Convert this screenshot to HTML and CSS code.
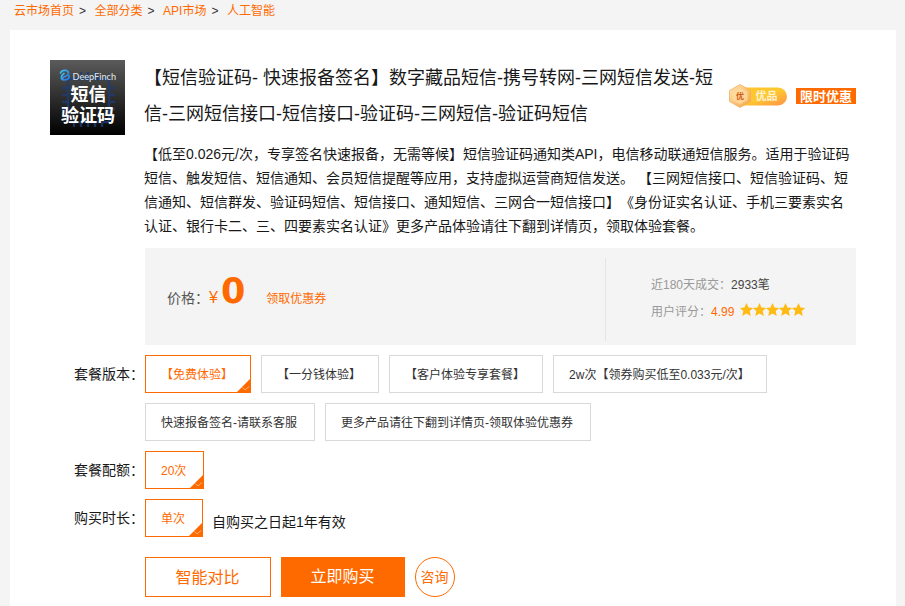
FILE: index.html
```
<!DOCTYPE html>
<html lang="zh-CN">
<head>
<meta charset="utf-8">
<title>短信验证码</title>
<link rel="stylesheet" href="styles.css">
</head>
<body>
<nav class="crumbs"><a>云市场首页</a><i>&gt;</i><a>全部分类</a><i>&gt;</i><a>API市场</a><i>&gt;</i><a>人工智能</a></nav>
<main class="panel">
  <svg class="logo" width="75" height="75" viewBox="0 0 75 75">
    <defs>
      <linearGradient id="bg" x1="0" y1="0" x2="0" y2="1"><stop offset="0" stop-color="#5b5b5b"/><stop offset="1" stop-color="#000"/></linearGradient>
      <linearGradient id="mark" x1="0" y1="0" x2="1" y2="1"><stop offset="0" stop-color="#3cc4ef"/><stop offset="1" stop-color="#2a6fe0"/></linearGradient>
    </defs>
    <rect width="75" height="75" fill="url(#bg)"/>
    <g stroke="#1d3d76" stroke-width="2.400" opacity=".75" fill="none">
      <rect x="18" y="19" width="41" height="43"/>
      <path d="M12 28h6M12 35h6M12 42h6M12 49h6M12 56h6M59 28h6M59 35h6M59 42h6M59 49h6M59 56h6M24 62v5M31 62v5M38 62v5M45 62v5M52 62v5M31 12v7M38 12v7M45 12v7"/>
    </g>
    <g fill="none" stroke="url(#mark)" stroke-width="1.700" stroke-linecap="round">
      <path d="M10.500 13c1.500-3.500 8-3.500 8 .5c0 3-6 2.500-6 5.500"/>
      <path d="M14 13.500c-3 2-4 6 0 6.500c3.500 0 6-2 5-4"/>
    </g>
    <text class="logo-brand" x="22.500" y="19.500" textLength="43.500" lengthAdjust="spacingAndGlyphs">DeepFinch</text>
    <text class="logo-name" x="20.500" y="41">短信</text>
    <text class="logo-name" x="11" y="61.500">验证码</text>
  </svg>
  <div class="detail">
    <header class="head">
      <h1>【短信验证码- 快速报备签名】数字藏品短信-携号转网-三网短信发送-短<br>信-三网短信接口-短信接口-验证码-三网短信-验证码短信</h1>
      <svg class="quality" width="60" height="26" viewBox="0 0 60 26">
        <defs>
          <linearGradient id="pill" x1="0" y1="0" x2="1" y2="1"><stop offset="0" stop-color="#ffc52e"/><stop offset=".5" stop-color="#ffc82f"/><stop offset="1" stop-color="#ff9148"/></linearGradient>
          <linearGradient id="hex" x1="0" y1="0" x2="1" y2="1"><stop offset="0" stop-color="#ffe5b0"/><stop offset="1" stop-color="#f7a448"/></linearGradient>
        </defs>
        <path d="M12 4.500h38a9 9 0 0 1 0 18H12z" fill="url(#pill)"/>
        <path d="M12 1.500L22.500 7.500v11L12 24.500L1.500 18.500v-11z" fill="url(#hex)" stroke="#f2a955" stroke-width=".7"/>
        <path d="M12 5L19.500 9v8l-7.500 4.300L4.500 17V9z" fill="#ffe0a3" opacity=".7"/>
        <text class="hex-text" x="8" y="16.200">优</text>
        <text class="pill-text" x="27.500" y="17">优品</text>
      </svg>
      <span class="limited">限时优惠</span>
    </header>
    <p class="desc">【低至0.026元/次，专享签名快速报备，无需等候】短信验证码通知类API，电信移动联通短信服务。适用于验证码<br>短信、触发短信、短信通知、会员短信提醒等应用，支持虚拟运营商短信发送。 【三网短信接口、短信验证码、短<br>信通知、短信群发、验证码短信、短信接口、通知短信、三网合一短信接口】《身份证实名认证、手机三要素实名<br>认证、银行卡二、三、四要素实名认证》更多产品体验请往下翻到详情页，领取体验套餐。</p>
    <section class="price-box">
      <div class="price"><span>价格：</span><span class="yen">¥</span><b>0</b><a class="coupon">领取优惠券</a></div>
      <div class="stats">
        <div>近180天成交：<span class="count">2933笔</span></div>
        <div class="rating">用户评分：<span class="score">4.99</span>
          <svg width="66" height="14" viewBox="0 0 66 14" fill="#ffbb13">
            <defs><path id="star" d="M6.500 0l2 4.400 4.700.5-3.500 3.200 1 4.900-4.200-2.500L2.300 13l1-4.900L-.2 4.900l4.700-.5z"/></defs>
            <use href="#star"/><use href="#star" x="13"/><use href="#star" x="26"/><use href="#star" x="39"/><use href="#star" x="52"/>
          </svg>
        </div>
      </div>
    </section>
    <section class="row">
      <span class="label">套餐版本：</span>
      <div class="options">
        <span class="opt on">【免费体验】<svg class="tick" width="15" height="15"><path d="M15 0v15H0z"/><path class="check" d="M6.500 9.500L9 12l4-3.500"/></svg></span>
        <span class="opt">【一分钱体验】</span>
        <span class="opt">【客户体验专享套餐】</span>
        <span class="opt wide">2w次【领券购买低至0.033元/次】</span>
        <span class="opt">快速报备签名-请联系客服</span>
        <span class="opt">更多产品请往下翻到详情页-领取体验优惠券</span>
      </div>
    </section>
    <section class="row">
      <span class="label">套餐配额：</span>
      <span class="opt on">20次<svg class="tick" width="15" height="15"><path d="M15 0v15H0z"/><path class="check" d="M6.500 9.500L9 12l4-3.500"/></svg></span>
    </section>
    <section class="row">
      <span class="label">购买时长：</span>
      <span class="opt on">单次<svg class="tick" width="15" height="15"><path d="M15 0v15H0z"/><path class="check" d="M6.500 9.500L9 12l4-3.500"/></svg></span>
      <span class="valid">自购买之日起1年有效</span>
    </section>
    <div class="actions"><a class="btn">智能对比</a><a class="btn buy">立即购买</a><a class="ask">咨询</a></div>
  </div>
</main>
</body>
</html>
```
FILE: styles.css
```
* { box-sizing: border-box; }
body {
  margin: 0;
  height: 606px;
  overflow: hidden;
  background: #f4f4f4;
  color: #181818;
  font: 12px/20px "Liberation Sans", "Noto Sans CJK SC", sans-serif;
  text-spacing-trim: space-all;
  white-space: nowrap;
}
.crumbs { height: 30px; padding: 0 14px; line-height: 22px; color: #333; }
.crumbs a { color: #ff6a00; }
.crumbs i { font-style: normal; margin: 0 8.500px 0 5px; }
.panel {
  display: flex;
  align-items: flex-start;
  gap: 20px;
  width: 886px;
  height: 576px;
  padding: 30px 40px 0;
  background: #fff;
  margin-left: 10px;
}
.logo { flex: none; }
.logo-brand { font: 500 10px Lato, sans-serif; fill: #dce4ec; }
.logo-name { font: bold 18px/18px "Noto Sans CJK SC", sans-serif; fill: #fff; }
.detail { width: 711px; }
.head { display: flex; height: 72px; align-items: center; }
h1 { margin: 0 0 0 -1px; width: 584px; font-size: 18px; font-weight: 400; line-height: 36px; }
.quality { flex: none; margin: 0 8px 0 0; }
.hex-text { font: bold 8px "Noto Sans CJK SC", sans-serif; fill: #d45b1b; }
.pill-text { font: bold 11px "Noto Sans CJK SC", sans-serif; fill: #fff2cf; }
.limited {
  width: 60px;
  height: 16px;
  background: #ff6a00;
  color: #fff;
  font: bold 13px/16px "Noto Sans CJK SC", sans-serif;
  text-align: center;
}
.desc { margin: 10px 0 10px -1px; font-size: 14px; line-height: 24px; }
.price-box { display: flex; height: 97px; background: #f4f4f4; padding: 10px 0 4px; }
.price { display: flex; align-items: baseline; width: 460px; padding: 14px 0 0 22px; height: 83px; color: #555; font-size: 14px; line-height: 38px; }
.yen { color: #ff6a00; font-size: 16px; }
.price b { color: #ff6a00; font: bold 35px/38px "DejaVu Sans", sans-serif; margin-left: 3px; }
.coupon { color: #ff6a00; font-size: 12px; margin-left: 21px; }
.stats { flex: 1; border-left: 1px solid #e4e4e4; padding: 14px 0 0 45px; line-height: 27px; color: #999; }
.count { color: #444; }
.score { color: #ff6a00; }
.rating { display: flex; }
.rating svg { margin: 4px 0 0 6px; }
.row { display: flex; height: 38px; margin: 10px 0 0 -71px; }
.row:has(.options) { height: 86px; }
.label { width: 71px; font-size: 14px; line-height: 38px; }
.options { display: flex; flex-wrap: wrap; gap: 10px; width: 711px; }
.opt { position: relative; height: 38px; padding: 1px 17px 0 15px; border: 1px solid #d9d9d9; line-height: 36px; color: #333; }
.opt.wide { width: 214px; }
.opt.on { border-color: #ff6a00; color: #ff6a00; }
.tick { position: absolute; right: -1px; bottom: -1px; fill: #ff6a00; }
.tick .check { fill: none; stroke: #ffb27a; stroke-width: 1; }
.valid { margin: 3px 0 0 9px; font-size: 14px; line-height: 40px; }
.actions { display: flex; gap: 10px; margin-top: 20px; }
.btn { width: 126px; height: 40px; padding-right: 1px; border: 1px solid #ff6a00; color: #ff6a00; font-size: 16px; line-height: 40px; text-align: center; }
.btn.buy { width: 124px; background: #ff6a00; color: #fff; line-height: 38px; }
.ask { width: 40px; height: 40px; padding-right: 1px; border: 1px solid #ff6a00; border-radius: 50%; color: #ff6a00; font-size: 14px; line-height: 38px; text-align: center; }
```
